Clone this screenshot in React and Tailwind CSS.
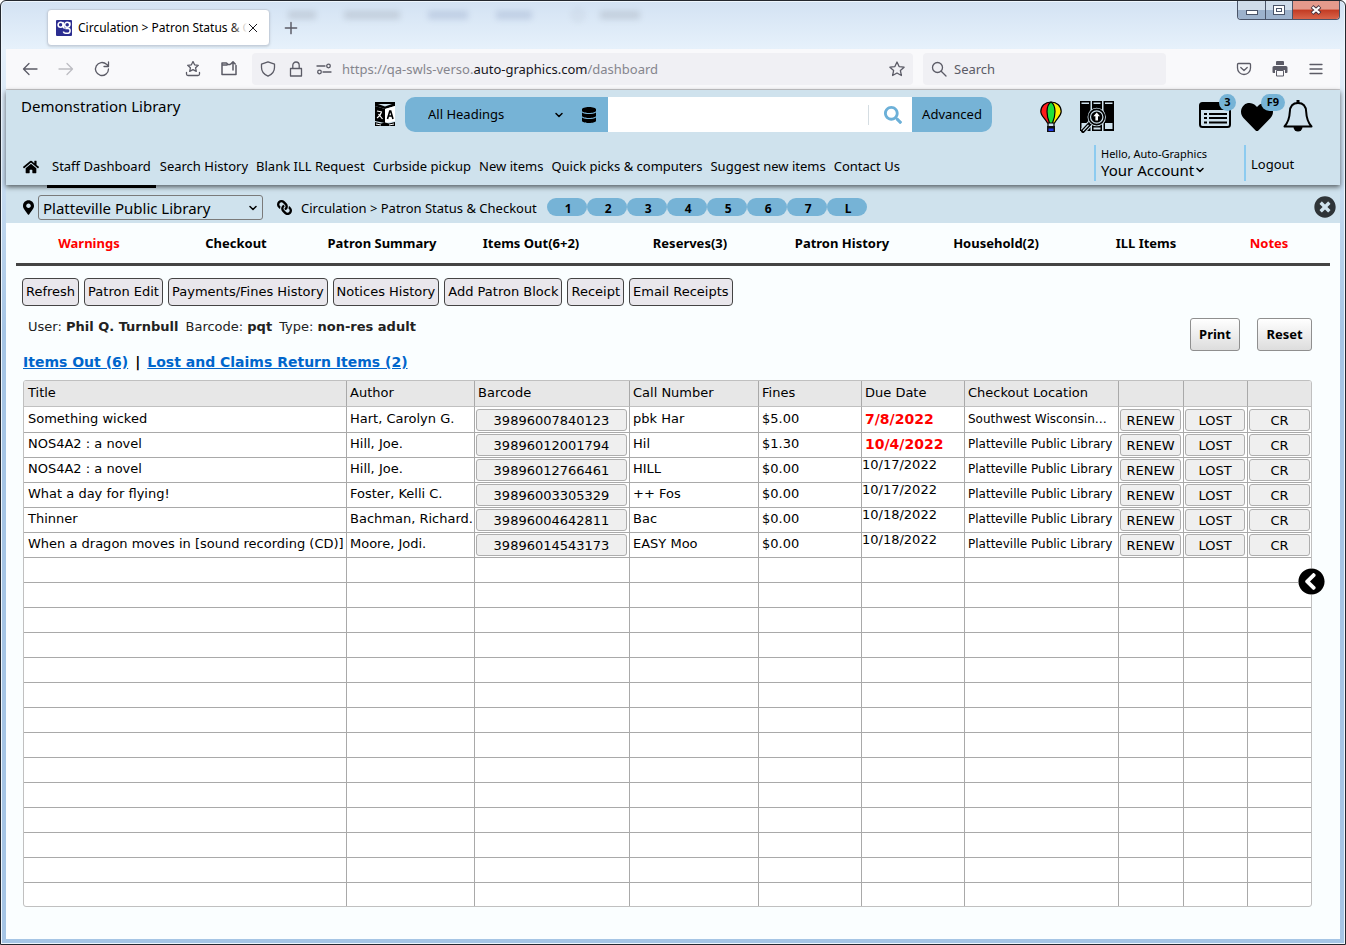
import { useState } from 'react';
import {
  FaHome,
  FaMapMarkerAlt,
  FaLink,
  FaDatabase,
  FaSearch,
  FaHeart,
  FaTimesCircle,
  FaChevronCircleLeft,
} from 'react-icons/fa';
import { ChevronDown } from 'lucide-react';

const navLinks = [
  'Staff Dashboard',
  'Search History',
  'Blank ILL Request',
  'Curbside pickup',
  'New items',
  'Quick picks & computers',
  'Suggest new items',
  'Contact Us',
];

const pills = ['1', '2', '3', '4', '5', '6', '7', 'L'];

const tabs = [
  { label: 'Warnings', alert: true },
  { label: 'Checkout' },
  { label: 'Patron Summary' },
  { label: 'Items Out(6+2)' },
  { label: 'Reserves(3)' },
  { label: 'Patron History' },
  { label: 'Household(2)' },
  { label: 'ILL Items' },
  { label: 'Notes', alert: true },
];

const actions = [
  'Refresh',
  'Patron Edit',
  'Payments/Fines History',
  'Notices History',
  'Add Patron Block',
  'Receipt',
  'Email Receipts',
];

const items = [
  { title: 'Something wicked', author: 'Hart, Carolyn G.', barcode: '39896007840123', call: 'pbk Har', fines: '$5.00', due: '7/8/2022', overdue: true, location: 'Southwest Wisconsin…' },
  { title: 'NOS4A2 : a novel', author: 'Hill, Joe.', barcode: '39896012001794', call: 'Hil', fines: '$1.30', due: '10/4/2022', overdue: true, location: 'Platteville Public Library' },
  { title: 'NOS4A2 : a novel', author: 'Hill, Joe.', barcode: '39896012766461', call: 'HILL', fines: '$0.00', due: '10/17/2022', location: 'Platteville Public Library' },
  { title: 'What a day for flying!', author: 'Foster, Kelli C.', barcode: '39896003305329', call: '++ Fos', fines: '$0.00', due: '10/17/2022', location: 'Platteville Public Library' },
  { title: 'Thinner', author: 'Bachman, Richard.', barcode: '39896004642811', call: 'Bac', fines: '$0.00', due: '10/18/2022', location: 'Platteville Public Library' },
  { title: 'When a dragon moves in [sound recording (CD)]', author: 'Moore, Jodi.', barcode: '39896014543173', call: 'EASY Moo', fines: '$0.00', due: '10/18/2022', location: 'Platteville Public Library' },
];

const headings = ['Title', 'Author', 'Barcode', 'Call Number', 'Fines', 'Due Date', 'Checkout Location', '', '', ''];
const emptyRows = Array.from({ length: 14 }, (_, i) => i);

// Thin outline icon used by the browser toolbar
function LineIcon({ children, className = 'size-4 text-[#5b5b66]' }) {
  return (
    <svg viewBox="0 0 16 16" fill="none" stroke="currentColor" strokeWidth="1.3" strokeLinecap="round" strokeLinejoin="round" className={className}>
      {children}
    </svg>
  );
}

function LogoIcon() {
  return (
    <svg viewBox="0 0 16 16" className="mr-[6px] size-4 shrink-0">
      <rect width="16" height="16" rx="1" fill="#2b2d90" />
      <g fill="none" stroke="#fff" strokeWidth="1.5">
        <circle cx="4.6" cy="4.8" r="2.5" />
        <path d="M7.3 2.3v4.2q0 1.5 1.5 1.7" />
        <circle cx="11.2" cy="4.8" r="2.5" />
        <path d="M13.8 2.3v3.200M9.300 8.400h3q1.800 0 1.800 2.300t-2 2.500h-2.300q-2.300 0-2.300-1.700" />
      </g>
    </svg>
  );
}

function TranslateIcon() {
  return (
    <svg viewBox="0 0 20 24" className="h-6 w-5">
      <path d="M0 0h20v4l-10 3L0 4z" fill="#000" />
      <path d="M3 2h14l-7 2.5z" fill="#cfe2ed" />
      <path d="M0 4l10 3v14L0 19z" fill="#000" />
      <path d="M10 7l10-3v15l-10 2z" fill="#fff" />
      <path d="M0 20l6 1.500 4-1 4 1 6-1.500v4H0z" fill="#000" />
      <path d="M1 22l5 1M14 23l5-1" stroke="#fff" />
      <g fill="none" stroke="#fff" strokeWidth="1.2">
        <path d="M2 9l5 1M6.500 10q-1 4-4.500 6M3.500 12l4 5" />
      </g>
      <path d="M12.500 17l2.300-8h.9l2.300 8M13.500 14h3.500" fill="none" stroke="#000" strokeWidth="1.6" />
    </svg>
  );
}

function BalloonIcon() {
  return (
    <svg viewBox="0 0 22 32" className="h-8 w-[22px]">
      <path d="M7.500 22C5 17 .8 15 .8 10.500.8 5 5 1 11 1s10.200 4 10.200 9.500C21.200 15 17 17 14.500 22z" fill="#ff1a1a" />
      <path d="M11 1c6 0 10.200 4 10.200 9.500C21.200 15 17 17 14.500 22H11z" fill="#ffed00" />
      <path d="M11 1c3 2 4 5 4 9.500 0 4-1 8-2.500 11.500h-3C8 18.500 7 14.500 7 10.500 7 6 8 3 11 1z" fill="#1ee03a" />
      <g fill="none" stroke="#000" strokeWidth="1.2">
        <path d="M7.500 22C5 17 .8 15 .8 10.500.8 5 5 1 11 1s10.200 4 10.200 9.500C21.200 15 17 17 14.500 22z" />
        <path d="M11 1C8 3 7 6 7 10.500 7 14.500 8 18.500 9.500 22M11 1c3 2 4 5 4 9.500 0 4-1 8-2.500 11.500M8 22v4M14 22v4" />
      </g>
      <path d="M7 25h8v6H7z" fill="#111" />
      <path d="M8.500 27.500h5V30h-5z" fill="#2039e8" />
    </svg>
  );
}

function BooksIcon() {
  return (
    <svg viewBox="0 0 34 32" className="h-8 w-[34px]">
      <path d="M0 0h10.500v30H0zM12 0h10v30H12zM23.500 0H34v30H23.500z" fill="#000" />
      <path d="M1.500 1.500H9V3H1.500zM13.500 1.500h7V3h-7zM25 1.500h7.500V3H25zM1.500 22H9v6H1.500zM13.500 26.500h7v2h-7zM25 22h7.500v6H25z" fill="#cfe2ed" />
      <path d="M10.500 22L3 30" stroke="#cfe2ed" strokeWidth="6" />
      <path d="M10.500 22L3 30" stroke="#000" strokeWidth="4" strokeLinecap="round" />
      <path d="M8.500 24L3 29.800" stroke="#cfe2ed" strokeWidth="1.2" />
      <circle cx="16.700" cy="16" r="9.200" fill="#cfe2ed" />
      <circle cx="16.700" cy="16" r="7.600" fill="#cfe2ed" stroke="#000" strokeWidth="1.6" />
      <circle cx="16.700" cy="16" r="5.600" fill="#000" />
      <path d="M16.700 11.500l3.300 3.700h-2v4.300h-2.600v-4.300h-2z" fill="#fff" />
    </svg>
  );
}

function ListIcon() {
  return (
    <svg viewBox="0 0 32 26" className="h-[26px] w-8">
      <rect x="1" y="1" width="30" height="24" rx="2.5" fill="#cfe2ed" stroke="#000" strokeWidth="2" />
      <path d="M1 2h30v6H1z" fill="#000" />
      <path d="M5 12h3M5 16h3M5 20.500h3M10 12h18M10 16h18M10 20.500h18" stroke="#000" strokeWidth="2" />
    </svg>
  );
}

function BellIcon() {
  return (
    <svg viewBox="0 0 30 32" className="h-8 w-[30px]" fill="none" stroke="#000" strokeWidth="2" strokeLinejoin="round">
      <path d="M15 3C9.500 3 7 7 6.800 12 6.500 19 5 22.500 1.500 26.500h27C25 22.500 23.500 19 23.200 12 23 7 20.500 3 15 3z" />
      <path d="M15 0v3" strokeWidth="3" />
      <path d="M10.500 27a4.500 4.500 0 0 0 9 0z" fill="#000" stroke="none" />
    </svg>
  );
}

function TitleBar() {
  return (
    <div className="flex h-12 items-start pl-[41px]">
      <div className="flex items-center gap-3 pt-2">
        <div className="flex h-[37px] w-[223px] items-center rounded-[4px] border border-[#c5cfdc] bg-white pl-2 pr-[10px] shadow-sm">
          <LogoIcon />
          <div className="relative flex-1 overflow-hidden whitespace-nowrap text-[12px] text-black">
            Circulation &gt; Patron Status &amp; Checkout
            <span className="absolute inset-y-0 right-0 w-4 bg-linear-to-r from-transparent to-white" />
          </div>
          <button aria-label="Close tab" className="text-[#15141a]">
            <LineIcon className="size-3">
              <path d="M3 3l10 10M13 3L3 13" />
            </LineIcon>
          </button>
        </div>
        <button aria-label="New tab" className="text-[#5b5b66]">
          <LineIcon className="size-[18px]">
            <path d="M3 8h10M8 3v10" />
          </LineIcon>
        </button>
      </div>
      {/* Window behind the glass frame */}
      <div aria-hidden="true" className="-ml-3 flex flex-1 items-center pt-2 opacity-30 blur-[3px]">
        <span className="h-2 w-7 bg-[#8d949e]" />
        <span className="ml-7 h-2 w-14 bg-[#8d949e]" />
        <span className="ml-7 h-2 w-10 bg-[#8093b8]" />
        <span className="ml-7 h-2 w-9 bg-[#8093b8]" />
        <span className="ml-10 size-3 rounded-full border-2 border-[#8d949e]" />
        <span className="ml-4 h-2 w-10 bg-[#8d949e]" />
      </div>
      <div className="flex h-[19px] overflow-hidden rounded-b-[4px] border border-t-0 border-[#4a5468]">
        <button aria-label="Minimize" className="flex w-7 items-center justify-center border-r border-[#4a5468] bg-linear-to-b from-[#cfdcea] from-50% to-[#9db2cc] to-50%">
          <span className="mt-1 h-[5px] w-3 border border-[#4a5468] bg-white" />
        </button>
        <button aria-label="Maximize" className="flex w-[27px] items-center justify-center border-r border-[#4a5468] bg-linear-to-b from-[#cfdcea] from-50% to-[#9db2cc] to-50%">
          <span className="flex h-[10px] w-3 items-center justify-center border border-[#4a5468] bg-white">
            <span className="h-1 w-[6px] border border-[#4a5468]" />
          </span>
        </button>
        <button aria-label="Close" className="flex w-[46px] items-center justify-center bg-linear-to-b from-[#e59a8c] from-45% via-[#c23a22] via-50% to-[#d9644a]">
          <svg viewBox="0 0 12 10" className="h-[10px] w-3">
            <path d="M2 1.500l8 7M10 1.500l-8 7" stroke="#4a3440" strokeWidth="4" />
            <path d="M2.500 2l7 6M9.500 2l-7 6" stroke="#fff" strokeWidth="2.2" />
          </svg>
        </button>
      </div>
    </div>
  );
}

function Toolbar() {
  return (
    <div className="flex h-[41px] items-center border-b border-[#cccccf] bg-[#f9f9fb] pl-4 pr-4">
      <div className="flex items-center gap-5">
        <button aria-label="Back">
          <LineIcon>
            <path d="M15 8H1.500M7 2.500L1.500 8 7 13.500" />
          </LineIcon>
        </button>
        <button aria-label="Forward" disabled>
          <LineIcon className="size-4 text-[#bdbdc2]">
            <path d="M1 8h13.500M9 2.500L14.500 8 9 13.500" />
          </LineIcon>
        </button>
        <button aria-label="Reload">
          <LineIcon>
            <path d="M14.500 8a6.500 6.500 0 1 1-2-4.700L14.500 5M14.500 1v4.500H10" />
          </LineIcon>
        </button>
      </div>
      <div className="ml-[75px] flex items-center gap-5">
        <button aria-label="Bookmarks">
          <LineIcon>
            <path d="M8 .5l1.600 3.300 3.700.5-2.700 2.500.7 3.600L8 8.700l-3.300 1.700.7-3.600L2.700 4.300l3.700-.5zM1.500 11.500v1.500q0 1.500 1.500 1.500h10q1.500 0 1.500-1.500v-1.500" />
          </LineIcon>
        </button>
        <button aria-label="Share page">
          <LineIcon>
            <path d="M9 3.500H7L5.500 2H1v11.500h14V4.500M1 4h5M12 9V1M9.800 3L12 .8 14.200 3" strokeWidth="1.5" />
          </LineIcon>
        </button>
      </div>
      <div className="ml-[15px] flex h-8 flex-1 items-center rounded-[4px] bg-[#f0f0f4] px-2">
        <div className="flex items-center gap-3">
          <LineIcon>
            <path d="M8 .8l6.500 2.400v3.300c0 4-2.500 7-6.500 8.700C4 13.500 1.500 10.500 1.500 6.500V3.200z" />
          </LineIcon>
          <LineIcon>
            <path d="M2.500 7.500h11v7.500h-11zM4.800 7.500V4.200a3.200 3.200 0 0 1 6.400 0v3.300" />
          </LineIcon>
          <LineIcon>
            <path d="M1 5h8M7 11h8" />
            <circle cx="12.500" cy="5" r="1.800" />
            <circle cx="3.500" cy="11" r="1.800" />
          </LineIcon>
        </div>
        <p className="ml-[10px] flex-1 pt-[2px] text-[13px] text-[#85858d]">
          https://qa-swls-verso.<span className="text-[#15141a]">auto-graphics.com</span>/dashboard
        </p>
        <button aria-label="Bookmark this page">
          <LineIcon>
            <path d="M8 1l2.100 4.600 5 .6-3.700 3.400 1 4.900L8 12l-4.400 2.500 1-4.900L.9 6.200l5-.6z" />
          </LineIcon>
        </button>
      </div>
      <label className="ml-[10px] flex h-8 w-[243px] items-center gap-[7px] rounded-[4px] bg-[#f0f0f4] px-2">
        <LineIcon>
          <circle cx="6.500" cy="6.500" r="5" />
          <path d="M10.200 10.200L15 15" />
        </LineIcon>
        <input type="text" placeholder="Search" className="w-40 bg-transparent pt-[2px] text-[13px] outline-none placeholder:text-[#5b5b66]" />
      </label>
      <div className="ml-[70px] flex items-center gap-5">
        <button aria-label="Save to Pocket">
          <LineIcon>
            <path d="M2.500 2.500h11q1 0 1 1V7a6.500 6.500 0 0 1-13 0V3.500q0-1 1-1zM4.800 6.500L8 9.500l3.200-3" />
          </LineIcon>
        </button>
        <button aria-label="Print page">
          <svg viewBox="0 0 16 16" className="size-4" fill="#5b5b66">
            <path d="M4 1q0-1 1-1h6q1 0 1 1v3H4zM2 5h12q1.500 0 1.500 1.500V11q0 1-1 1H13V9H3v3H1.500q-1 0-1-1V6.500Q.5 5 2 5z" />
            <path d="M4.500 9.500h7v5.500h-7z" fill="#f9f9fb" stroke="#5b5b66" />
          </svg>
        </button>
        <button aria-label="Open menu">
          <LineIcon>
            <path d="M2 3.500h12M2 8h12M2 12.500h12" />
          </LineIcon>
        </button>
      </div>
    </div>
  );
}

function SearchBar() {
  return (
    <form className="flex h-[35px] w-[587px] overflow-hidden rounded-[10px]" onSubmit={(e) => e.preventDefault()}>
      <div className="flex w-[203px] items-center bg-[#76b3d6] pl-[23px] pr-[11px]">
        <div className="grid flex-1 items-center">
          <select aria-label="Search headings" className="col-start-1 row-start-1 appearance-none pt-px text-[13px] text-black outline-none">
            <option>All Headings</option>
          </select>
          <ChevronDown className="pointer-events-none col-start-1 row-start-1 size-3 justify-self-end" strokeWidth={3} />
        </div>
        <button aria-label="Databases" className="ml-4">
          <FaDatabase className="size-4" />
        </button>
      </div>
      <input type="text" aria-label="Search terms" className="w-[260px] bg-white px-2 text-[13px] outline-none" />
      <button aria-label="Search" className="flex w-11 items-center justify-center bg-white">
        <span className="flex h-5 w-full items-center justify-center border-l border-[#d5dde2] pl-1">
          <FaSearch className="size-[18px] text-[#6cb0d8]" />
        </span>
      </button>
      <button className="w-20 bg-[#76b3d6] text-[13px] text-black">Advanced</button>
    </form>
  );
}

function Header() {
  return (
    <header className="relative z-10 h-[95px] bg-[#cfe2ed] text-black shadow-[0_2px_5px_rgba(0,0,0,0.6)]">
      <div className="flex h-[49px] items-start pl-[15px] pr-[27px] pt-[7px]">
        <h1 className="w-[354px] text-[15px] leading-[18px]">Demonstration Library</h1>
        <button aria-label="Language" className="mr-[10px] mt-[5px]">
          <TranslateIcon />
        </button>
        <SearchBar />
        <div className="ml-12 flex flex-1 items-start pt-1">
          <button aria-label="What's new">
            <BalloonIcon />
          </button>
          <button aria-label="Browse shelves" className="ml-[18px]">
            <BooksIcon />
          </button>
        </div>
        <div className="flex items-start gap-[10px]">
          <button aria-label="Lists" className="relative mt-[5px]">
            <ListIcon />
            <span className="absolute -right-[5px] -top-2 flex size-[17px] items-center justify-center rounded-full bg-[#76b3d6] text-[11px] font-bold">3</span>
          </button>
          <button aria-label="Favorites" className="relative mt-1">
            <FaHeart className="h-8 w-8" />
            <span className="absolute -right-3 -top-[7px] flex h-[17px] w-6 items-center justify-center rounded-full bg-[#76b3d6] text-[11px] font-bold">F9</span>
          </button>
          <button aria-label="Notifications" className="mt-[3px]">
            <BellIcon />
          </button>
        </div>
      </div>
      <div className="flex items-start pl-[17px]">
        <nav className="flex flex-1 items-start">
          <a href="#home" aria-label="Home" className="mr-[8px] mt-5">
            <FaHome className="size-4" />
          </a>
          <ul className="flex text-[13px]">
            {navLinks.map((link, i) => (
              <li key={link}>
                <a
                  href="#nav"
                  className={
                    i === 0
                      ? 'block h-[49px] border-b-[3px] border-black px-[5px] pt-[17px] leading-5'
                      : 'block h-[49px] px-1 pt-[17px] leading-5'
                  }
                >
                  {link}
                </a>
              </li>
            ))}
          </ul>
        </nav>
        <button className="mt-[6px] h-9 w-[150px] border-l-2 border-[#8ccbf0] pl-[5px] text-left">
          <span className="block text-[11px] leading-[14px]">Hello, Auto-Graphics</span>
          <span className="flex items-center text-[15px] leading-[18px]">
            Your Account
            <ChevronDown className="size-3" strokeWidth={3} />
          </span>
        </button>
        <a href="#logout" className="mt-[6px] flex h-9 w-24 items-center border-l-2 border-[#8ccbf0] pl-[5px] pt-[3px] text-[13px]">
          Logout
        </a>
      </div>
    </header>
  );
}

function LocationBar() {
  return (
    <div className="flex h-[38px] items-center bg-[#cfe2ed] pl-[17px] pr-1 pt-[7px] text-black">
      <FaMapMarkerAlt className="h-[15px] w-[11px]" />
      <div className="ml-1 grid w-[225px] items-center">
        <select aria-label="Library" className="col-start-1 row-start-1 h-[25px] w-full appearance-none rounded-[3px] border border-[#7a7a7a] pl-1 text-[15px] leading-[22px]">
          <option>Platteville Public Library</option>
        </select>
        <ChevronDown className="pointer-events-none col-start-1 row-start-1 mr-1 size-3 justify-self-end" strokeWidth={3} />
      </div>
      <FaLink className="ml-[14px] size-[15px] -scale-x-100" />
      <p className="ml-[9px] pt-[3px] text-[13px]">Circulation &gt; Patron Status &amp; Checkout</p>
      <div className="ml-[10px] flex flex-1 pb-[2px]">
        {pills.map((pill) => (
          <button key={pill} className="h-[18px] w-10 rounded-[9px] bg-[#76b3d6] pl-[3px] pt-[3px] text-[12px] font-bold leading-[15px]">
            {pill}
          </button>
        ))}
      </div>
      <button aria-label="Close panel" className="pb-[2px] text-[#2f3437]">
        <FaTimesCircle className="size-[22px]" />
      </button>
    </div>
  );
}

function GridButton({ children }) {
  return (
    <button className="block h-[22px] w-full rounded-[3px] border border-[#adadad] bg-[#efefef] pt-px text-center text-[13px] leading-5">
      {children}
    </button>
  );
}

function ItemsTable() {
  return (
    <div className="overflow-hidden rounded-[3px] border border-[#c0c0c0] bg-white">
      <table className="w-full table-fixed border-separate border-spacing-0 whitespace-nowrap text-left text-[13px] leading-4 text-black">
        <colgroup>
          <col />
          <col className="w-[128px]" />
          <col className="w-[155px]" />
          <col className="w-[129px]" />
          <col className="w-[103px]" />
          <col className="w-[103px]" />
          <col className="w-[154px]" />
          <col className="w-[65px]" />
          <col className="w-[64px]" />
          <col className="w-[63px]" />
        </colgroup>
        <thead>
          <tr className="h-[26px] bg-[#e7e7e7]">
            {headings.map((heading, i) => (
              <th key={i} className="border-b border-r border-b-[#c0c0c0] border-r-[#a9a9a9] pb-px pl-[3px] font-normal first:pl-1 last:border-r-0">
                {heading}
              </th>
            ))}
          </tr>
        </thead>
        <tbody className="[&_td]:border-b [&_td]:border-r [&_td]:border-[#a9a9a9] [&_td:last-child]:border-r-0 [&_tr:last-child_td]:border-b-0">
          {items.map((item) => (
            <tr key={item.barcode} className="h-[25px] first:h-[26px]">
              <td className="pb-[2px] pl-1">{item.title}</td>
              <td className="pb-[2px] pl-[3px]">{item.author}</td>
              <td className="pl-px pr-[2px]">
                <GridButton>{item.barcode}</GridButton>
              </td>
              <td className="pb-[2px] pl-[3px]">{item.call}</td>
              <td className="pb-[2px] pl-[3px]">{item.fines}</td>
              {item.overdue ? (
                <td className="pb-[2px] pl-[3px] text-[14px] font-bold text-[#ff0000]">{item.due}</td>
              ) : (
                <td className="align-top leading-[14px]">{item.due}</td>
              )}
              <td className="pb-[2px] pl-[3px] text-[12px]">{item.location}</td>
              <td className="pl-px pr-[2px]"><GridButton>RENEW</GridButton></td>
              <td className="pl-px pr-[2px]"><GridButton>LOST</GridButton></td>
              <td className="px-px"><GridButton>CR</GridButton></td>
            </tr>
          ))}
          {emptyRows.map((row) => (
            <tr key={row} className="h-[25px] last:h-[23px]">
              {headings.map((_, i) => (
                <td key={i} />
              ))}
            </tr>
          ))}
        </tbody>
      </table>
    </div>
  );
}

function App() {
  const [activeTab, setActiveTab] = useState('Items Out(6+2)');

  return (
    <div className="flex min-h-screen flex-col rounded-t-[6px] border border-[#23272e] bg-linear-to-b from-[#d3e2f3] via-[#e6f1fb] via-5% to-[#a5c5e5] to-35% px-[5px] pb-[5px] font-['Noto_Sans',sans-serif] shadow-[inset_0_0_0_1px_#eef6fd]">
      <TitleBar />
      <Toolbar />
      <Header />
      <LocationBar />
      <main className="relative flex-1 bg-[#fafeff] font-['DejaVu_Sans',sans-serif]">
        <nav className="mx-[10px] grid h-[43px] grid-cols-[146fr_148fr_144fr_154fr_164fr_140fr_168fr_132fr_114fr] border-b-[3px] border-[#444444] pr-1 font-['Noto_Sans',sans-serif]">
          {tabs.map((tab) => (
            <button
              key={tab.label}
              onClick={() => setActiveTab(tab.label)}
              aria-pressed={activeTab === tab.label}
              className={tab.alert ? 'pt-px text-[13px] font-bold text-[#ff0000]' : 'pt-px text-[13px] font-bold text-black'}
            >
              {tab.label}
            </button>
          ))}
        </nav>

        <div className="pl-4 pr-7 pt-3">
          {/* Patron actions */}
          <div className="flex flex-wrap gap-[5px]">
            {actions.map((action) => (
              <button key={action} className="h-7 rounded-[4px] border border-[#444444] bg-[#e9e7ec] px-[3px] text-[13px] text-black">
                {action}
              </button>
            ))}
          </div>

          <div className="flex items-start justify-between pt-3">
            <div>
              <p className="flex gap-[7px] pl-[6px] text-[13px] leading-[18px] text-[#222222]">
                <span>User: <b>Phil Q. Turnbull</b></span>
                <span>Barcode: <b>pqt</b></span>
                <span>Type: <b>non-res adult</b></span>
              </p>
              <h2 className="flex gap-[7px] pl-px pt-4 text-[14px] font-bold leading-5 text-black">
                <a href="#out" className="text-[#0066cc] underline">Items Out (6)</a>
                <span>|</span>
                <a href="#lost" className="text-[#0066cc] underline">Lost and Claims Return Items (2)</a>
              </h2>
            </div>
            <div className="flex gap-[17px] font-['Noto_Sans',sans-serif] text-[13px] font-bold text-black">
              <button className="h-[33px] w-[50px] rounded-[3px] border border-[#8f8f8f] bg-linear-to-b from-white to-[#dddddd]">Print</button>
              <button className="h-[33px] w-[55px] rounded-[3px] border border-[#8f8f8f] bg-linear-to-b from-white to-[#dddddd]">Reset</button>
            </div>
          </div>

          <div className="ml-px mt-2">
            <ItemsTable />
          </div>
        </div>

        <button aria-label="Open side panel" className="absolute right-[15px] top-[345px] rounded-full bg-white text-black">
          <FaChevronCircleLeft className="size-[27px]" />
        </button>
      </main>
    </div>
  );
}

export default App;
